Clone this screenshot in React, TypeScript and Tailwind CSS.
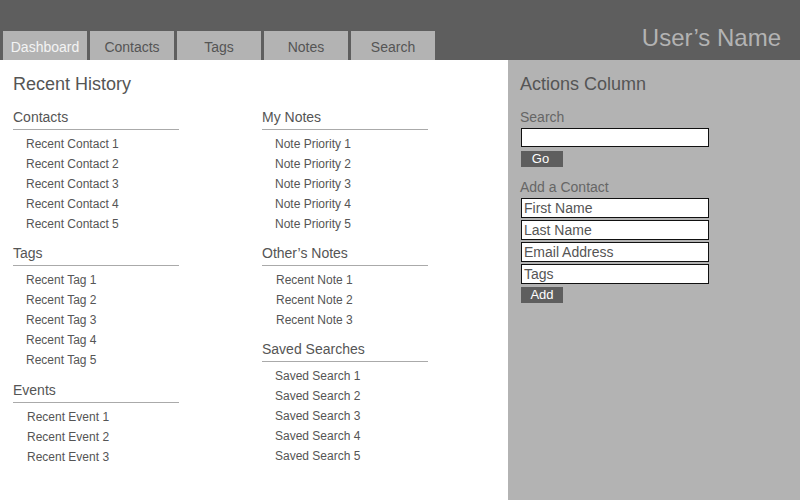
import React from "react";

const font = { fontFamily: '"Liberation Sans", Arial, sans-serif' };

function Section({ title, items, first, indent = "pl-[13px]", extra = "" }: { title: string; items: string[]; first?: boolean; indent?: string; extra?: string }) {
  return (
    <div className={first ? "" : `mt-[9px] ${extra}`}>
      <div className="text-[14px] leading-[20px] text-[#555] pb-[2px] border-b border-[#aaa]">{title}</div>
      <div className="mt-[4px]">
        {items.map((t) => (
          <div key={t} className={`text-[12px] leading-[20px] text-[#555] ${indent}`}>{t}</div>
        ))}
      </div>
    </div>
  );
}

export default function App() {
  const tabs = ["Dashboard", "Contacts", "Tags", "Notes", "Search"];
  return (
    <div className="w-[800px] h-[500px] overflow-hidden bg-white" style={font}>
      <div className="h-[60px] bg-[#5e5e5e] flex justify-between items-end">
        <div className="flex gap-[3px] pl-[3px]">
          {tabs.map((t, i) => (
            <div
              key={t}
              className={`w-[84px] h-[29px] bg-[#b3b3b3] flex items-center justify-center text-[14px] pt-[3px] ${i === 0 ? "text-[#f4f4f4]" : "text-[#555]"}`}
            >
              {t}
            </div>
          ))}
        </div>
        <div className="text-[24px] leading-[28px] text-[#b3b3b3] pr-[19px] pb-[8px]">User’s Name</div>
      </div>
      <div className="flex h-[440px]">
        <div className="w-[508px] bg-white pl-[13px] pt-[12px]">
          <div className="text-[18px] leading-[24px] text-[#555]">Recent History</div>
          <div className="mt-[11px] grid grid-cols-[166px_166px] gap-x-[83px]">
            <div>
              <Section first title="Contacts" items={["Recent Contact 1", "Recent Contact 2", "Recent Contact 3", "Recent Contact 4", "Recent Contact 5"]} />
              <Section title="Tags" items={["Recent Tag 1", "Recent Tag 2", "Recent Tag 3", "Recent Tag 4", "Recent Tag 5"]} />
              <Section title="Events" extra="pt-[1px]" indent="pl-[14px]" items={["Recent Event 1", "Recent Event 2", "Recent Event 3"]} />
            </div>
            <div>
              <Section first title="My Notes" items={["Note Priority 1", "Note Priority 2", "Note Priority 3", "Note Priority 4", "Note Priority 5"]} />
              <Section title="Other’s Notes" indent="pl-[14px]" items={["Recent Note 1", "Recent Note 2", "Recent Note 3"]} />
              <Section title="Saved Searches" items={["Saved Search 1", "Saved Search 2", "Saved Search 3", "Saved Search 4", "Saved Search 5"]} />
            </div>
          </div>
        </div>
        <div className="flex-1 bg-[#b3b3b3] pl-[12px] pt-[12px]">
          <div className="text-[18px] leading-[24px] text-[#555]">Actions Column</div>
          <div className="mt-[11px] text-[14px] leading-[20px] text-[#666]">Search</div>
          <div className="mt-[1px] ml-[1px] w-[188px] h-[19px] bg-white border border-[#111]"></div>
          <div className="mt-[4px] ml-[1px] w-[42px] h-[16px] bg-[#5e5e5e] text-white text-[13px] leading-[16px] flex items-center justify-center pr-[3px]">Go</div>
          <div className="mt-[10px] text-[14px] leading-[20px] text-[#666]">Add a Contact</div>
          <div className="mt-[1px] flex flex-col gap-[2px]">
            {["First Name", "Last Name", "Email Address", "Tags"].map((p) => (
              <div key={p} className="ml-[1px] w-[188px] h-[20px] bg-white border border-[#111] text-[14px] leading-[18px] text-[#555] pl-[2px]">
                {p}
              </div>
            ))}
          </div>
          <div className="mt-[3px] ml-[1px] w-[42px] h-[16px] bg-[#5e5e5e] text-white text-[13px] leading-[16px] flex items-center justify-center">Add</div>
        </div>
      </div>
    </div>
  );
}
